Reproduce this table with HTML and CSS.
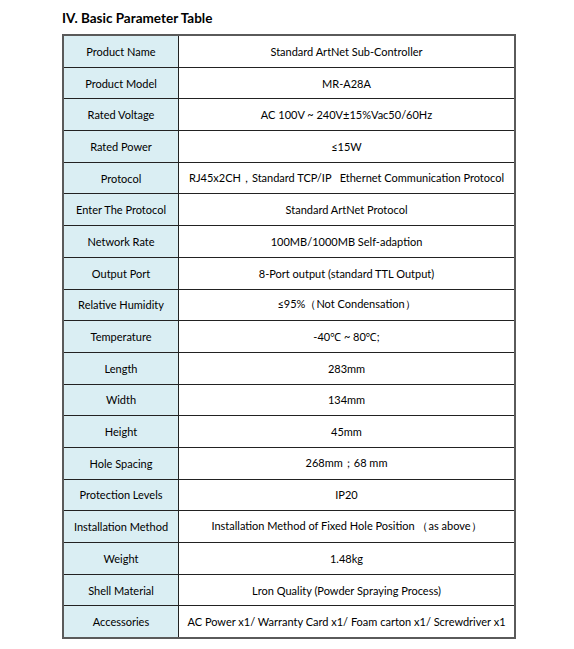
FILE: index.html
```html
<!DOCTYPE html>
<html lang="en">
<head>
<meta charset="utf-8">
<title>Basic Parameter Table</title>
<link rel="stylesheet" href="styles.css">
</head>
<body>
<main class="page">
  <h2 class="title">IV. Basic Parameter Table</h2>
  <table class="params">
    <tbody>
      <tr><th>Product Name</th><td>Standard ArtNet Sub-Controller</td></tr>
      <tr><th>Product Model</th><td>MR-A28A</td></tr>
      <tr><th>Rated Voltage</th><td>AC 100V ~ 240V±15%Vac50/60Hz</td></tr>
      <tr><th>Rated Power</th><td>≤15W</td></tr>
      <tr><th>Protocol</th><td>RJ45x2CH，Standard TCP/IP&nbsp;&nbsp; Ethernet Communication Protocol</td></tr>
      <tr><th>Enter The Protocol</th><td>Standard ArtNet Protocol</td></tr>
      <tr><th>Network Rate</th><td>100MB/1000MB Self-adaption</td></tr>
      <tr><th>Output Port</th><td>8-Port output (standard TTL Output)</td></tr>
      <tr><th>Relative Humidity</th><td>≤95%（Not Condensation）</td></tr>
      <tr><th>Temperature</th><td>-40℃ ~ 80℃;</td></tr>
      <tr><th>Length</th><td>283mm</td></tr>
      <tr><th>Width</th><td>134mm</td></tr>
      <tr><th>Height</th><td>45mm</td></tr>
      <tr><th>Hole Spacing</th><td>268mm；68 mm</td></tr>
      <tr><th>Protection Levels</th><td>IP20</td></tr>
      <tr><th>Installation Method</th><td>Installation Method of Fixed Hole Position （as above）</td></tr>
      <tr><th>Weight</th><td>1.48kg</td></tr>
      <tr><th>Shell Material</th><td>Lron Quality (Powder Spraying Process)</td></tr>
      <tr><th>Accessories</th><td>AC Power x1/ Warranty Card x1/ Foam carton x1/ Screwdriver x1</td></tr>
    </tbody>
  </table>
</main>
</body>
</html>
```

FILE: styles.css
```css
html, body {
  margin: 0;
  padding: 0;
  background: #ffffff;
}

.page {
  padding: 10px 0 0 62px;
  font-family: Lato, "Noto Sans", "Liberation Sans", sans-serif;
  color: #000;
}

.title {
  margin: 0 0 8px 0;
  font-size: 13.5px;
  font-weight: 700;
  line-height: 16px;
  color: #000;
}

.params {
  width: 454px;
  border-collapse: collapse;
  border: 2px solid #5a5a5a;
  table-layout: fixed;
  font-size: 11px;
}

.params th,
.params td {
  height: 30.7px;
  padding: 0 3px;
  border: 1px solid #222;
  text-align: center;
  vertical-align: middle;
  font-weight: 400;
  white-space: nowrap;
}

.params th {
  width: 108px;
  background: #daeef3;
}

.params td {
  background: #ffffff;
}
```
